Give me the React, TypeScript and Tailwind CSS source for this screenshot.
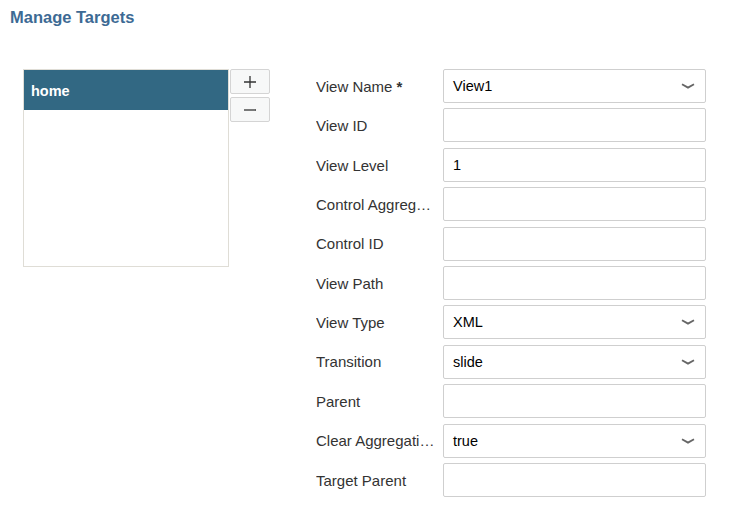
const fields = [
  { label: "View Name", required: true, value: "View1", select: true },
  { label: "View ID", value: "" },
  { label: "View Level", value: "1" },
  { label: "Control Aggregation", value: "" },
  { label: "Control ID", value: "" },
  { label: "View Path", value: "" },
  { label: "View Type", value: "XML", select: true },
  { label: "Transition", value: "slide", select: true },
  { label: "Parent", value: "" },
  { label: "Clear Aggregation", value: "true", select: true },
  { label: "Target Parent", value: "" },
];

function Chevron() {
  return (
    <svg width="14" height="6" viewBox="0 0 14 6" className="shrink-0">
      <path d="M1 1.2 L7 4.6 L13 1.2" fill="none" stroke="#666" strokeWidth="1.8" />
    </svg>
  );
}

function App() {
  return (
    <div className="w-[753px] h-[532px] bg-white text-[#333] font-['Liberation_Sans',Arial,sans-serif] relative">
      <h1 className="pl-[10px] pt-[7px] text-[16.5px] leading-[20px] font-bold text-[#3d6a94]">
        Manage Targets
      </h1>

      <div className="flex mt-[42px]">
        <div className="flex ml-[23px] gap-[1px]">
          <div className="w-[206px] h-[198px] border border-[#dfddd6] bg-white">
            <div className="h-[40px] bg-[#326883] text-white font-bold text-[14.5px] flex items-center pl-[7px] pt-[3px]">
              home
            </div>
          </div>
          <div className="flex flex-col gap-[3px]">
            <button className="w-[40px] h-[25px] border border-[#d4d4d4] rounded-[2px] bg-[#f7f8f8] flex items-center justify-center">
              <svg width="14" height="14" viewBox="0 0 14 14">
                <path d="M7 1 V13 M1 7 H13" stroke="#333" strokeWidth="1.3" />
              </svg>
            </button>
            <button className="w-[40px] h-[25px] border border-[#d4d4d4] rounded-[2px] bg-[#f7f8f8] flex items-center justify-center">
              <svg width="14" height="14" viewBox="0 0 14 14">
                <path d="M1 7 H13" stroke="#333" strokeWidth="1.3" />
              </svg>
            </button>
          </div>
        </div>

        <div className="ml-[46px] flex flex-col gap-[5.4px]">
          {fields.map((f) => (
            <div key={f.label} className="flex items-center h-[34px]">
              <div className="w-[119px] mr-[8px] truncate text-[15px] pt-[2px]">
                {f.label}
                {f.required && <span className="font-bold"> *</span>}
              </div>
              <div className="w-[263px] h-[34px] border border-[#cfcfcf] rounded-[2px] flex items-center justify-between pl-[9px] pr-[10px] text-[14.5px] text-black">
                <span className="pt-[2px]">{f.value}</span>
                {f.select && <Chevron />}
              </div>
            </div>
          ))}
        </div>
      </div>
    </div>
  );
}

export default App;
